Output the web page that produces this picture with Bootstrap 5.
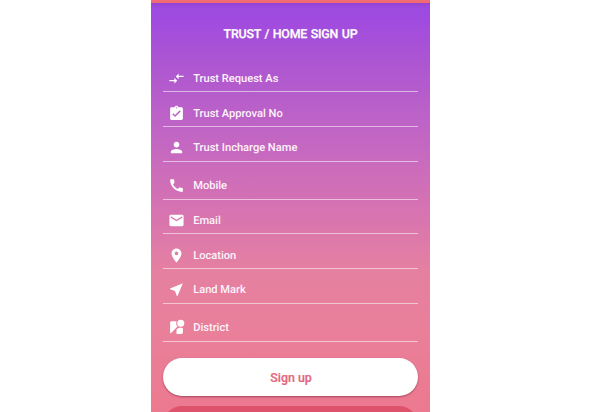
<!DOCTYPE html>
<html lang="en">
<head>
<meta charset="utf-8">
<meta name="viewport" content="width=device-width, initial-scale=1">
<title>Trust / Home Sign Up</title>
<link href="https://cdn.jsdelivr.net/npm/bootstrap@5.3.0/dist/css/bootstrap.min.css" rel="stylesheet">
<style>
body { font-family: Roboto, "Liberation Sans", sans-serif; background: #fff; text-rendering: geometricPrecision; }
.phone { width: 279px; height: 412px; margin-left: 151px; padding: 0 12px; border-top: 3px solid #f26b74;
  background: linear-gradient(180deg, #9444d2 0, #9c4ae0 5px, #a04be0 16px, #ac55d2 57px, #c065c5 127px, #d471b4 197px, #e580a1 267px, #e9809b 320px, #ec798f 409px); }
.title { font-size: 12.4px; line-height: 16px; margin: 24px 0 14.7px; font-weight: 500; letter-spacing: -.19px; word-spacing: .7px; -webkit-text-stroke: .25px #fff; }
.field { height: 34.7px; padding: 7.9px 0 0 5px; font-size: 11.1px; line-height: 17px; font-weight: 500; color: #fff4fc; border-bottom: 1px solid rgba(255,255,255,.55); gap: 8.2px; }
.field svg { width: 17px; height: 17px; fill: #fff; flex: none; }
.spaced { height: 38px; padding-top: 11px; }
.signup { height: 38px; margin-top: 16.4px; font-size: 12.4px; line-height: 18px; font-weight: 500; color: #e5667a; background: #fff; box-shadow: 0 1px 2px rgba(110,30,55,.55); -webkit-text-stroke: .2px #e5667a; }
.signup span { padding-left: 1px; position: relative; top: .5px; }
.signup:hover { color: #e5667a; background: #fff; }
.second { height: 38px; margin-top: 10px; background: #df526b; }
</style>
<script src="https://cdn.jsdelivr.net/npm/bootstrap@5.3.0/dist/js/bootstrap.bundle.min.js"></script>
</head>
<body class="overflow-hidden">
<main class="phone overflow-hidden">
  <h1 class="title text-white text-center">TRUST / HOME SIGN UP</h1>
  <form class="d-flex flex-column">
    <div class="field d-flex align-items-center"><svg viewBox="0 0 24 24"><path d="M9.01 14H2v2h7.01v3L13 15l-3.99-4v3zm5.98-1v-3H22V8h-7.01V5L11 9l3.99 4z"/></svg><span>Trust Request As</span></div>
    <div class="field d-flex align-items-center"><svg viewBox="0 0 24 24"><path d="M19 3h-4.18C14.4 1.84 13.3 1 12 1s-2.4.84-2.82 2H5c-1.1 0-2 .9-2 2v14c0 1.1.9 2 2 2h14c1.1 0 2-.9 2-2V5c0-1.1-.9-2-2-2zm-7 0c.55 0 1 .45 1 1s-.45 1-1 1-1-.45-1-1 .45-1 1-1zm-2 14l-4-4 1.41-1.41L10 14.17l6.59-6.59L18 9l-8 8z"/></svg><span>Trust Approval No</span></div>
    <div class="field d-flex align-items-center"><svg viewBox="0 0 24 24"><path d="M12 12c2.21 0 4-1.79 4-4s-1.79-4-4-4-4 1.79-4 4 1.79 4 4 4zm0 2c-2.67 0-8 1.34-8 4v2h16v-2c0-2.66-5.33-4-8-4z"/></svg><span>Trust Incharge Name</span></div>
    <div class="field spaced d-flex align-items-center"><svg viewBox="0 0 24 24"><path d="M20.01 15.38c-1.23 0-2.42-.2-3.53-.56-.35-.12-.74-.03-1.01.24l-1.57 1.97c-2.83-1.35-5.48-3.9-6.89-6.83l1.95-1.66c.27-.28.35-.67.24-1.02-.37-1.11-.56-2.3-.56-3.53 0-.54-.45-.99-.99-.99H4.19C3.65 3 3 3.24 3 3.99 3 13.28 10.73 21 20.01 21c.71 0 .99-.63.99-1.18v-3.45c0-.54-.45-.99-.99-.99z"/></svg><span>Mobile</span></div>
    <div class="field d-flex align-items-center"><svg viewBox="0 0 24 24"><path d="M20 4H4c-1.1 0-1.99.9-1.99 2L2 18c0 1.1.9 2 2 2h16c1.1 0 2-.9 2-2V6c0-1.1-.9-2-2-2zm0 4l-8 5-8-5V6l8 5 8-5v2z"/></svg><span>Email</span></div>
    <div class="field d-flex align-items-center"><svg viewBox="0 0 24 24"><path d="M12 2C8.13 2 5 5.13 5 9c0 5.25 7 13 7 13s7-7.75 7-13c0-3.87-3.13-7-7-7zm0 9.5c-1.38 0-2.5-1.12-2.5-2.5s1.12-2.5 2.5-2.5 2.5 1.12 2.5 2.5-1.12 2.5-2.5 2.5z"/></svg><span>Location</span></div>
    <div class="field d-flex align-items-center"><svg viewBox="0 0 24 24"><path d="M21 3L3 10.53v.98l6.84 2.65L12.48 21h.98L21 3z"/></svg><span>Land Mark</span></div>
    <div class="field spaced d-flex align-items-center"><svg viewBox="0 0 24 24"><path d="M12.56 14.33c-.34.27-.56.7-.56 1.17V21h7c1.1 0 2-.9 2-2v-5.98c-.94-.33-1.95-.52-3-.52-2.03 0-3.93.7-5.44 1.83z"/><circle cx="18" cy="6" r="5"/><path d="M11.5 6c0-1.08.27-2.1.74-3H5c-1.1 0-2 .9-2 2v14c0 .55.23 1.05.59 1.41l9.82-9.82C12.23 9.42 11.5 7.8 11.5 6z"/></svg><span>District</span></div>
    <button type="button" class="signup btn rounded-pill border-0 p-0"><span>Sign up</span></button>
    <div class="second rounded-pill"></div>
  </form>
</main>
</body>
</html>
